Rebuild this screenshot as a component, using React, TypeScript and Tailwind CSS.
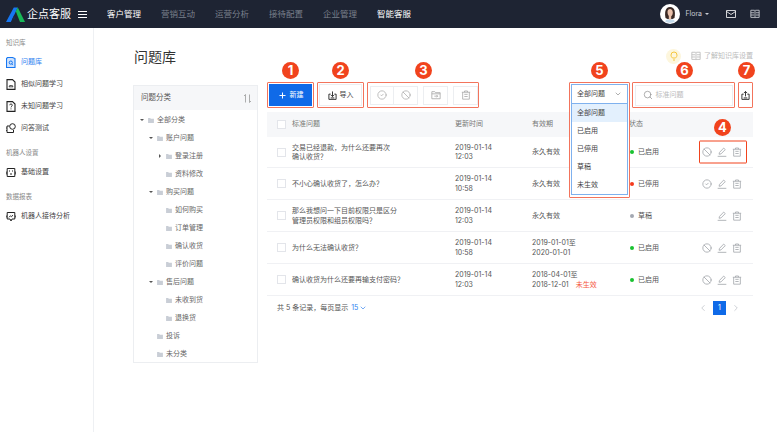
import React from 'react';
import { Ban, ChevronDown, ChevronLeft, ChevronRight, CircleCheck, Plus, Search } from 'lucide-react';

const font = { fontFamily: '"Inter", "Noto Sans CJK SC", sans-serif' };

function Trash({ className = '' }: { className?: string }) {
  return (
    <svg viewBox="0 0 12 12" fill="none" stroke="currentColor" strokeWidth="1" className={className}>
      <path d="M1 2.700h10M4.200 2.700V1.200h3.600v1.500M2 2.700v8.300h8V2.700M4 5.200h4M4 7.800h4" />
    </svg>
  );
}

function Pen({ className = '' }: { className?: string }) {
  return (
    <svg viewBox="0 0 12 12" fill="none" stroke="currentColor" strokeWidth="1" className={className}>
      <path d="M2.500 8.700l.5-2.200L8 1.300l1.900 1.800-5.100 5.200zM.8 11.200h10.400" />
    </svg>
  );
}

function FolderMove({ className = '' }: { className?: string }) {
  return (
    <svg viewBox="0 0 12 12" fill="none" stroke="currentColor" strokeWidth="1" className={className}>
      <path d="M1 2h3.500l1 1.200H11V10.500H1zM1 4.600h10M4 7.400h4M6.600 6l1.400 1.400-1.400 1.400" />
    </svg>
  );
}

function Book({ className = '' }: { className?: string }) {
  return (
    <svg viewBox="0 0 12 12" fill="none" stroke="currentColor" strokeWidth="1" className={className}>
      <path d="M1 1.500h4.200L6 2.200l.8-.7H11v8.600H6.900l-.9.6-.9-.6H1zM6 2.200v8.400M1 4.500h4M7 4.500h4M1 7.200h4M7 7.200h4" />
    </svg>
  );
}

function Logo() {
  return (
    <svg viewBox="0 0 19 15" className="w-[19px] h-[15px] shrink-0">
      <path d="M0 15L7.800 0.500h4L4.800 15z" fill="#1677f2" />
      <path d="M11.800 0.500L19 15h-5L9.800 4.200z" fill="#18b858" />
      <path d="M6 12.500l2-4 1.800 4z" fill="#1b2a4a" />
    </svg>
  );
}

function Avatar() {
  return (
    <svg viewBox="0 0 20 20" className="w-5 h-5 shrink-0">
      <circle cx="10" cy="10" r="10" fill="#fff" />
      <clipPath id="ava"><circle cx="10" cy="10" r="9" /></clipPath>
      <g clipPath="url(#ava)">
        <path d="M4 20c0-3 3-5 6-5s6 2 6 5z" fill="#c5dcec" />
        <path d="M5.500 14c-1-5-.5-11 4.500-11s5.500 5 4.500 11l-2 1h-5z" fill="#3a2a26" />
        <path d="M7.500 8c0-2 1-3 2.500-3s2.800 1.500 2.800 3.500c0 2.500-1.300 4-2.700 4S7.500 10.500 7.500 8z" fill="#eac1ab" />
        <path d="M8.800 12h2.400v3l-1.200 1-1.200-1z" fill="#eac1ab" />
      </g>
    </svg>
  );
}

function DocIcon({ kind }: { kind: string }) {
  if (kind === 'active') {
    return (
      <svg viewBox="0 0 10 11" fill="none" className="w-[10px] h-[11px]">
        <path d="M1.500.5h5L9 1.500v9H.5v-9z" fill="#cfe2fc" stroke="#1677f2" strokeWidth="1.100" />
        <circle cx="4.800" cy="5.600" r="1.600" stroke="#1677f2" strokeWidth="1" />
        <path d="M5.800 6.800l1 1" stroke="#1677f2" strokeWidth="1" />
      </svg>
    );
  }
  if (kind === 'similar') {
    return (
      <svg viewBox="0 0 10 11" fill="none" stroke="#222" strokeWidth="1.100" className="w-[10px] h-[11px]">
        <path d="M1 .6h5.500L9 3v7.400H1z" />
        <path d="M3 7.800l1.200-1.800 1 1 .8-.8 1 1.600z" strokeWidth="0.800" />
      </svg>
    );
  }
  if (kind === 'unknown') {
    return (
      <svg viewBox="0 0 10 11" fill="none" stroke="#222" strokeWidth="1.100" className="w-[10px] h-[11px]">
        <path d="M1 .6h5.500L9 3v7.400H1z" />
        <path d="M3.700 4.200c0-1.700 2.600-1.700 2.600 0 0 1-1.300 1-1.300 2.200M5 7.400v1" strokeWidth="0.900" />
      </svg>
    );
  }
  if (kind === 'test') {
    return (
      <svg viewBox="0 0 10 11" fill="none" stroke="#222" strokeWidth="1" className="w-[10px] h-[11px]">
        <path d="M1 3h2.500M1 3v6.500h6.500V7M.2 5H1M.2 7.500H1" />
        <circle cx="6.500" cy="3.500" r="2.800" />
      </svg>
    );
  }
  if (kind === 'robot') {
    return (
      <svg viewBox="0 0 10 11" fill="none" stroke="#222" strokeWidth="1" className="w-[10px] h-[11px]">
        <path d="M1.200 1.500h7.600v8H1.200zM.2 4.500v3M9.800 4.500v3M4 7h2" />
        <path d="M3 4h1M6 4h1" strokeWidth="1.200" />
      </svg>
    );
  }
  return (
    <svg viewBox="0 0 10 11" fill="none" stroke="#222" strokeWidth="1" className="w-[10px] h-[11px]">
      <path d="M1.200 1.500h7.600v6.500H6l-1 2-1-2H1.200zM.2 4.500v2M9.800 4.500v2M3 6.300l1.500-1.500 1 .8L7 4.200" />
    </svg>
  );
}

function Badge({ n, className = '' }: { n: number; className?: string }) {
  return (
    <span
      className={`absolute w-[17px] h-[17px] rounded-full bg-[#f1431d] text-white text-[13px] font-bold leading-none flex items-center justify-center ${className}`}
    >
      {n}
    </span>
  );
}

function SideItem({ icon, label, active }: { icon: string; label: string; active?: boolean }) {
  return (
    <div className={`h-[22px] pl-[6px] flex items-center gap-[5px] text-[7px] ${active ? 'text-[#2f81f0]' : 'text-[#444]'}`}>
      <DocIcon kind={icon} />
      <span>{label}</span>
    </div>
  );
}

function Sidebar() {
  return (
    <aside className="w-[94px] shrink-0 border-r border-[#eef0f3] pt-[11px]">
      <div className="pl-[6px] h-[9px] leading-[9px] text-[6.500px] text-[#888] mb-[3px]">知识库</div>
      <SideItem icon="active" label="问题库" active />
      <SideItem icon="similar" label="相似问题学习" />
      <SideItem icon="unknown" label="未知问题学习" />
      <SideItem icon="test" label="问答测试" />
      <div className="pl-[6px] h-[9px] leading-[9px] text-[6.500px] text-[#888] mt-[10px] mb-[3px]">机器人设置</div>
      <SideItem icon="robot" label="基础设置" />
      <div className="pl-[6px] h-[9px] leading-[9px] text-[6.500px] text-[#888] mt-[10px] mb-[3px]">数据报表</div>
      <SideItem icon="chart" label="机器人接待分析" />
    </aside>
  );
}

const tree: { label: string; indent: string; arrow?: 'down' | 'right' }[] = [
  { label: '全部分类', indent: 'pl-[14px]', arrow: 'down' },
  { label: '账户问题', indent: 'pl-[23px]', arrow: 'down' },
  { label: '登录注册', indent: 'pl-[32px]', arrow: 'right' },
  { label: '资料修改', indent: 'pl-[32px]' },
  { label: '购买问题', indent: 'pl-[23px]', arrow: 'down' },
  { label: '如何购买', indent: 'pl-[32px]' },
  { label: '订单管理', indent: 'pl-[32px]' },
  { label: '确认收货', indent: 'pl-[32px]' },
  { label: '评价问题', indent: 'pl-[32px]' },
  { label: '售后问题', indent: 'pl-[23px]', arrow: 'down' },
  { label: '未收到货', indent: 'pl-[32px]' },
  { label: '退换货', indent: 'pl-[32px]' },
  { label: '投诉', indent: 'pl-[23px]' },
  { label: '未分类', indent: 'pl-[23px]' },
];

function TreePanel() {
  return (
    <div className="w-[125px] shrink-0 h-[278px] border border-[#eceef1]">
      <div className="h-[24px] bg-[#f6f7f9] flex items-center justify-between pl-[7px] pr-[5px] text-[7.500px] text-[#555]">
        <span>问题分类</span>
        <svg viewBox="0 0 9 9" fill="none" stroke="#999" strokeWidth="0.800" className="w-[9px] h-[9px]">
          <path d="M2.500 8.500V.5L1 2M6.500.5v8L8 7" />
        </svg>
      </div>
      <div className="pt-[1px]">
        {tree.map((t) => (
          <div key={t.label} className={`relative h-[18px] flex items-center text-[7px] text-[#666] ${t.indent}`}>
            {t.arrow === 'down' && (
              <span className="absolute -ml-[8px] w-0 h-0 border-x-[2px] border-x-transparent border-t-[2.500px] border-t-[#555]" />
            )}
            {t.arrow === 'right' && (
              <span className="absolute -ml-[7px] w-0 h-0 border-y-[2px] border-y-transparent border-l-[2.500px] border-l-[#555]" />
            )}
            <svg viewBox="0 0 7 6" className="w-[6px] h-[5px] mr-[3px] shrink-0" fill="#c9ced6">
              <path d="M0 0h2.500l.8.8H7V6H0z" />
            </svg>
            <span>{t.label}</span>
          </div>
        ))}
      </div>
    </div>
  );
}

function IconBtn({ children, joined }: { children: React.ReactNode; joined?: boolean }) {
  return (
    <div className={`w-[25px] h-[19px] border border-[#eceef1] flex items-center justify-center text-[#aaa] ${joined ? '-ml-px' : ''}`}>
      {children}
    </div>
  );
}

function Toolbar() {
  return (
    <div className="flex h-[26px]">
      <div className="relative w-[47px] border-[1.500px] border-[#f3745c] rounded-[1px] p-[1px] mr-[3px]">
        <Badge n={1} className="-top-[21px] left-[14px]" />
        <div className="h-full bg-[#0f6ae8] text-white text-[7px] flex items-center justify-center gap-[3px]">
          <Plus size={9} strokeWidth={2.600} />
          <span>新建</span>
        </div>
      </div>
      <div className="relative w-[47px] border-[1.500px] border-[#f3745c] rounded-[1px] p-[1px] mr-[3px]">
        <Badge n={2} className="-top-[21px] left-[14px]" />
        <div className="h-full border border-[#eceef1] text-[#444] text-[7px] flex items-center justify-center gap-[3px]">
          <svg viewBox="0 0 10 10" fill="none" stroke="#222" strokeWidth="1" className="w-[9px] h-[9px]">
            <path d="M3 3.500H1v5.800h8V3.500H7M5 .5v5.500M3.300 4.500L5 6.200l1.700-1.700M3 7.700h4" />
          </svg>
          <span>导入</span>
        </div>
      </div>
      <div className="relative w-[112px] border-[1.500px] border-[#f3745c] rounded-[1px] flex items-center pl-[1.500px]">
        <Badge n={3} className="-top-[21px] left-[47px]" />
        <IconBtn><CircleCheck size={10} strokeWidth={1.800} /></IconBtn>
        <IconBtn joined><Ban size={10} strokeWidth={1.800} /></IconBtn>
        <div className="w-[5px]" />
        <IconBtn><FolderMove className="w-[10px] h-[10px]" /></IconBtn>
        <div className="w-[5px]" />
        <IconBtn><Trash className="w-[10px] h-[10px]" /></IconBtn>
      </div>

      <div className="relative ml-[90px] w-[61px] h-[116px] border-[1.500px] border-[#f3745c] rounded-[1px] p-[1px] z-10 bg-white">
        <Badge n={5} className="-top-[21px] left-[21px]" />
        <div className="h-[20px] border border-[#7fb1ee] flex items-center justify-between pl-[5px] pr-[5px] text-[7px] text-[#444]">
          <span>全部问题</span>
          <ChevronDown size={8} strokeWidth={2} className="text-[#888]" />
        </div>
        <div className="border border-t-0 border-[#7fb1ee] text-[7px] text-[#444]">
          {['全部问题', '已启用', '已停用', '草稿', '未生效'].map((o, i) => (
            <div key={o} className={`h-[18px] pl-[5px] flex items-center ${i === 0 ? 'bg-[#e3f0fd]' : ''}`}>{o}</div>
          ))}
        </div>
      </div>
      <div className="relative ml-[2px] w-[103px] border-[1.500px] border-[#f3745c] rounded-[1px] p-[1.500px]">
        <Badge n={6} className="-top-[21px] left-[43px]" />
        <div className="h-full border border-[#eceef1] flex items-center pl-[7px] gap-[3px] text-[7px] text-[#bbb]">
          <Search size={10} strokeWidth={1.600} className="text-[#888]" />
          <span>标准问题</span>
        </div>
      </div>
      <div className="relative ml-[3px] w-[15px] border-[1.500px] border-[#f3745c] rounded-[1px] flex items-center justify-center">
        <Badge n={7} className="-top-[21px] -left-px" />
        <svg viewBox="0 0 10 10" fill="none" stroke="#222" strokeWidth="1" className="w-[9px] h-[9px]">
          <path d="M3 3.500H1v5.800h8V3.500H7M5 6V.5M3.300 2.200L5 .5l1.700 1.700M3 7.700h4" />
        </svg>
      </div>
    </div>
  );
}

type Row = {
  q: string[];
  time: string[];
  valid: React.ReactNode;
  status: string;
  dot: string;
  toggle?: 'ban' | 'check';
  h: string;
};

const rows: Row[] = [
  { q: ['交易已经退款，为什么还要再次', '确认收货？'], time: ['2019-01-14', '12:03'], valid: '永久有效', status: '已启用', dot: 'bg-[#19c230]', toggle: 'ban', h: 'h-[31px]' },
  { q: ['不小心确认收货了，怎么办？'], time: ['2019-01-14', '10:58'], valid: '永久有效', status: '已停用', dot: 'bg-[#f5391c]', toggle: 'check', h: 'h-[32px]' },
  { q: ['那么我想问一下目前权限只是区分', '管理员权限和组员权限吗？'], time: ['2019-01-14', '12:03'], valid: '永久有效', status: '草稿', dot: 'bg-[#a3a8b2]', h: 'h-[32px]' },
  { q: ['为什么无法确认收货？'], time: ['2019-01-14', '10:58'], valid: <><div>2019-01-01至</div><div>2020-01-01</div></>, status: '已启用', dot: 'bg-[#19c230]', toggle: 'ban', h: 'h-[32px]' },
  { q: ['确认收货为什么还要再输支付密码？'], time: ['2019-01-14', '12:03'], valid: <><div>2018-04-01至</div><div>2018-12-01<span className="ml-[7px] text-[#f5563c]">未生效</span></div></>, status: '已启用', dot: 'bg-[#19c230]', toggle: 'ban', h: 'h-[32px]' },
];

const cols = 'grid grid-cols-[25px_163px_77px_97px_70px_53px] items-center';

function Checkbox() {
  return <span className="block ml-[10px] w-[9px] h-[9px] border border-[#e3e5ea] bg-white" />;
}

function Table() {
  return (
    <div className="mt-[4px]">
      <div className={`${cols} h-[25px] bg-[#f6f7f9] text-[7px] text-[#777]`}>
        <Checkbox />
        <span>标准问题</span>
        <span>更新时间</span>
        <span>有效期</span>
        <span>状态</span>
        <span />
      </div>
      {rows.map((r, i) => (
        <div key={i} className={`${cols} ${r.h} border-b border-[#f0f1f4] text-[7px] leading-[9.500px] text-[#555]`}>
          <Checkbox />
          <div>{r.q.map((l) => <div key={l}>{l}</div>)}</div>
          <div>{r.time.map((l) => <div key={l}>{l}</div>)}</div>
          <div>{r.valid}</div>
          <div className="flex items-center gap-[4px] pl-[1px]">
            <span className={`w-[4px] h-[4px] rounded-full ${r.dot}`} />
            <span>{r.status}</span>
          </div>
          <div className="relative flex items-center gap-[5px] pl-[3px] text-[#a5a8ad]">
            {i === 0 && (
              <>
                <span className="absolute left-0 top-1/2 -translate-y-1/2 w-[48px] h-[23px] border border-[#f1431d] rounded-[1px]" />
                <Badge n={4} className="left-[15px] -top-[28px]" />
              </>
            )}
            <span className="w-[10px] h-[10px]">
              {r.toggle === 'ban' && <Ban size={10} strokeWidth={2} />}
              {r.toggle === 'check' && <CircleCheck size={10} strokeWidth={2} />}
            </span>
            <Pen className="w-[10px] h-[10px]" />
            <Trash className="w-[10px] h-[10px]" />
          </div>
        </div>
      ))}
      <div className="flex items-center justify-between h-[24px] pl-[10px] text-[7px] text-[#555]">
        <div className="flex items-center">
          共 5 条记录，每页显示
          <span className="ml-[3px] text-[#2f81f0]">15</span>
          <ChevronDown size={8} strokeWidth={2} className="ml-[1px] text-[#2f81f0]" />
        </div>
        <div className="flex items-center gap-[1px] pr-[12px] text-[#c4c7cc]">
          <ChevronLeft size={10} strokeWidth={2} />
          <span className="mx-[4px] w-[13px] h-[14px] bg-[#0f6ae8] text-white flex items-center justify-center">1</span>
          <ChevronRight size={10} strokeWidth={2} />
        </div>
      </div>
    </div>
  );
}

export default function App() {
  return (
    <div className="w-[777px] h-[432px] overflow-hidden bg-white flex flex-col" style={font}>
      <header className="h-[28px] shrink-0 bg-[#1e2433] flex items-center pl-[6px]">
        <Logo />
        <span className="ml-[2px] text-white text-[11px] w-[46px] whitespace-nowrap">企点客服</span>
        <svg viewBox="0 0 9 7" className="ml-[5px] w-[9px] h-[7px]" stroke="#fff" strokeWidth="1"><path d="M0 .5h9M0 3.500h9M0 6.500h9" /></svg>
        <nav className="ml-[20px] flex gap-[20px] text-[8.500px]">
          <span className="text-white">客户管理</span>
          <span className="text-[#7a808c]">营销互动</span>
          <span className="text-[#7a808c]">运营分析</span>
          <span className="text-[#7a808c]">接待配置</span>
          <span className="text-[#7a808c]">企业管理</span>
          <span className="text-white">智能客服</span>
        </nav>
        <div className="ml-auto flex items-center pr-[17px]">
          <Avatar />
          <span className="ml-[5px] text-[7px] text-[#c8ccd3]">Flora</span>
          <span className="ml-[3px] w-0 h-0 border-x-[2px] border-x-transparent border-t-[2.500px] border-t-[#c8ccd3]" />
          <svg viewBox="0 0 10 8" fill="none" stroke="#fff" strokeWidth="0.8" className="ml-[17px] w-[10px] h-[8px]"><path d="M.5.5h9v7h-9zM.5 1.500L5 4.500l4.500-3" /></svg>
          <Book className="ml-[14px] w-[10px] h-[10px] text-[#ccd0d6]" />
        </div>
      </header>
      <div className="flex flex-1 min-h-0">
        <Sidebar />
        <main className="flex-1 pl-[39px] pr-[24px] relative">
          <div className="h-[57px] flex justify-between pt-[20px]">
            <h1 className="pl-[1px] text-[14px] leading-[18px] text-[#333]">问题库</h1>
            <div className="flex items-center h-[16px] text-[7px] text-[#bbb]">
              <span className="w-[15px] h-[15px] rounded-full bg-[#fdf6dd] flex items-center justify-center mr-[10px]">
                <svg viewBox="0 0 8 10" fill="none" stroke="#f5c63c" strokeWidth="1" className="w-[8px] h-[10px]"><path d="M2.500 7C1.500 6 1 5.200 1 4a3 3 0 016 0c0 1.200-.5 2-1.500 3zM3 9h2" /></svg>
              </span>
              <Book className="w-[10px] h-[10px] mr-[3px] text-[#bbb]" />
              <span>了解知识库设置</span>
            </div>
          </div>
          <div className="flex gap-[9px]">
            <TreePanel />
            <div className="flex-1 -mt-[3px]">
              <Toolbar />
              <Table />
            </div>
          </div>
        </main>
      </div>
    </div>
  );
}
